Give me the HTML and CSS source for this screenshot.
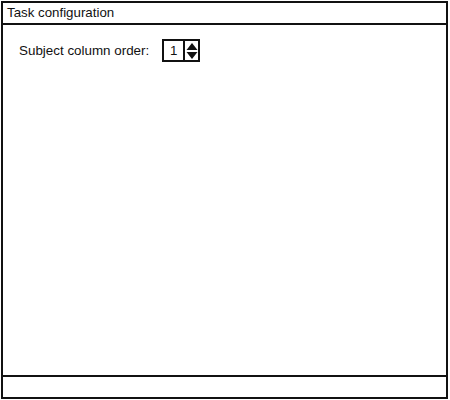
FILE: index.html
```html
<!DOCTYPE html>
<html>
<head>
<meta charset="utf-8">
<link rel="stylesheet" href="styles.css">
</head>
<body>
<div class="window">
  <div class="titlebar">Task configuration</div>
  <div class="content">
    <div class="row">
      <span class="label">Subject column order:</span>
      <div class="spinner">
        <span class="value">1</span>
        <span class="arrows">
          <svg width="12" height="18" viewBox="0 0 12 18">
            <path d="M6 1 L11.5 8 L0.5 8 Z" fill="#111"/>
            <path d="M6 17 L11.5 10 L0.5 10 Z" fill="#111"/>
          </svg>
        </span>
      </div>
    </div>
  </div>
  <div class="footer"></div>
</div>
</body>
</html>
```
FILE: styles.css
```css
html, body {
  margin: 0;
  padding: 0;
  background: #fff;
}
body {
  padding: 1px 1px 0 1px;
  font-family: "Liberation Sans", Arial, sans-serif;
  color: #111;
}
.window {
  width: 447px;
  height: 398px;
  box-sizing: border-box;
  border: 2px solid #111;
  display: flex;
  flex-direction: column;
}
.titlebar {
  height: 20px;
  border-bottom: 2px solid #111;
  font-size: 13.3px;
  line-height: 20px;
  padding-left: 4px;
}
.content {
  flex: 1;
  padding: 14px 0 0 16px;
}
.row {
  display: flex;
  align-items: center;
  gap: 13px;
}
.label {
  font-size: 13.4px;
}
.spinner {
  display: flex;
  border: 2px solid #111;
  height: 19px;
}
.value {
  width: 19px;
  font-size: 13.3px;
  line-height: 19px;
  text-align: center;
  border-right: 2px solid #111;
}
.arrows {
  width: 13px;
  display: flex;
  align-items: center;
  justify-content: center;
}
.arrows svg {
  display: block;
}
.footer {
  height: 20px;
  border-top: 2px solid #111;
}
```
